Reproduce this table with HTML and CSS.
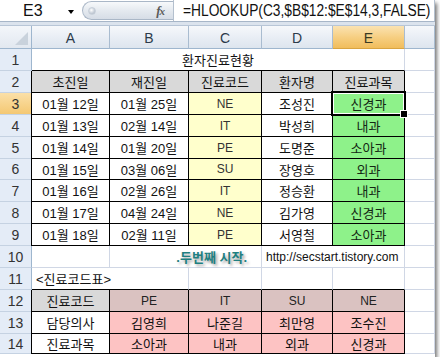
FILE: index.html
```html
<!DOCTYPE html>
<html lang="ko">
<head>
<meta charset="utf-8">
<link rel="stylesheet" href="styles.css">
</head>
<body>
<div class="frame">
  <div class="fbar">
    <div class="namebox"><span class="ref">E3</span><span class="arrow"></span></div>
    <div class="pill"><span class="knob"></span><span class="fx"><span class="f">f</span><span class="x">x</span></span></div>
    <div class="formula"><span class="ftext">=HLOOKUP(C3,$B$12:$E$14,3,FALSE)</span></div>
  </div>
  <div class="band"></div>
  <div class="sheet">
    <div class="corner"><span class="tri"></span></div>
    <div class="ch">A</div><div class="ch">B</div><div class="ch">C</div><div class="ch">D</div><div class="ch on">E</div><div class="ch"></div>

    <div class="rh">1</div>
    <div class="c m5 bb">환자진료현황</div><div class="c"></div>

    <div class="rh">2</div>
    <div class="c k hd lft">초진일</div><div class="c k hd">재진일</div><div class="c k hd">진료코드</div><div class="c k hd">환자명</div><div class="c k hd">진료과목</div><div class="c"></div>

    <div class="rh on">3</div>
    <div class="c k lft">01월 12일</div><div class="c k">01월 25일</div><div class="c k yl">NE</div><div class="c k">조성진</div><div class="c k gr sel">신경과</div><div class="c"></div>

    <div class="rh">4</div>
    <div class="c k lft">01월 13일</div><div class="c k">02월 14일</div><div class="c k yl">IT</div><div class="c k">박성희</div><div class="c k gr">내과</div><div class="c"></div>

    <div class="rh">5</div>
    <div class="c k lft">01월 14일</div><div class="c k">01월 20일</div><div class="c k yl">PE</div><div class="c k">도명준</div><div class="c k gr">소아과</div><div class="c"></div>

    <div class="rh">6</div>
    <div class="c k lft">01월 15일</div><div class="c k">03월 06일</div><div class="c k yl">SU</div><div class="c k">장영호</div><div class="c k gr">외과</div><div class="c"></div>

    <div class="rh">7</div>
    <div class="c k lft">01월 16일</div><div class="c k">02월 26일</div><div class="c k yl">IT</div><div class="c k">정승환</div><div class="c k gr">내과</div><div class="c"></div>

    <div class="rh">8</div>
    <div class="c k lft">01월 17일</div><div class="c k">04월 24일</div><div class="c k yl">NE</div><div class="c k">김가영</div><div class="c k gr">신경과</div><div class="c"></div>

    <div class="rh">9</div>
    <div class="c k lft">01월 18일</div><div class="c k">02월 11일</div><div class="c k yl">PE</div><div class="c k">서영철</div><div class="c k gr">소아과</div><div class="c"></div>

    <div class="rh">10</div>
    <div class="c"></div><div class="c m2 right"><span class="title2">.두번째 시작.</span></div><div class="c m2 left"><span class="url">http://secstart.tistory.com</span></div><div class="c"></div>

    <div class="rh">11</div>
    <div class="c m2 left bb"><span class="note">&lt;진료코드표&gt;</span></div><div class="c bb"></div><div class="c bb"></div><div class="c bb"></div><div class="c"></div>

    <div class="rh">12</div>
    <div class="c k hd lft">진료코드</div><div class="c k dp code">PE</div><div class="c k dp code">IT</div><div class="c k dp code">SU</div><div class="c k dp code">NE</div><div class="c"></div>

    <div class="rh">13</div>
    <div class="c k lft">담당의사</div><div class="c k pk">김영희</div><div class="c k pk">나준길</div><div class="c k pk">최만영</div><div class="c k pk">조수진</div><div class="c"></div>

    <div class="rh">14</div>
    <div class="c k lft">진료과목</div><div class="c k pk">소아과</div><div class="c k pk">내과</div><div class="c k pk">외과</div><div class="c k pk">신경과</div><div class="c"></div>
  </div>
</div>
</body>
</html>
```
FILE: styles.css
```css
* { box-sizing: border-box; }
body {
  margin: 0;
  background: #fff;
  font-family: "Liberation Sans", "Noto Sans CJK KR", sans-serif;
}
.frame {
  width: 435px;
  height: 357px;
  overflow: hidden;
  background: #fff;
  box-shadow: 2px 3px 4px rgba(0, 0, 0, 0.55);
}

/* formula bar */
.fbar {
  display: flex;
  height: 22px;
  background: #fff;
  border-bottom: 1px solid #a7b6c8;
}
.namebox {
  width: 82px;
  display: flex;
  align-items: center;
  position: relative;
}
.ref {
  padding-left: 23px;
  font-size: 16px;
  color: #111;
  width: 68px;
}
.arrow {
  width: 0;
  height: 0;
  border-left: 3.5px solid transparent;
  border-right: 3.5px solid transparent;
  border-top: 4px solid #000;
  margin-top: 2px;
}
.pill {
  width: 91px;
  height: 19px;
  margin-top: 1px;
  border: 1px solid #aab7c7;
  border-right: none;
  border-radius: 10px 0 0 10px;
  background: linear-gradient(#f7f9fb, #e3e8ee 55%, #d6dde6);
  display: flex;
  align-items: center;
  justify-content: space-between;
  padding: 0 9px 0 5px;
}
.knob {
  width: 8px;
  height: 8px;
  border-radius: 50%;
  background: radial-gradient(circle at 40% 35%, #ffffff, #c4ccd6 60%, #a7b1bd);
  border: 1px solid #c8d0da;
}
.fx {
  font-family: "Liberation Serif", serif;
  font-style: italic;
  font-weight: bold;
  color: #5a5a5a;
  font-size: 13px;
  letter-spacing: -1px;
}
.fx .x { font-size: 11px; }
.formula {
  flex: 1;
  border-left: 1px solid #b4c0ce;
  border-right: 1px solid #b4c0ce;
  display: flex;
  align-items: center;
  padding-left: 9px;
  overflow: hidden;
  white-space: nowrap;
}
.ftext {
  display: inline-block;
  font-size: 16px;
  color: #111;
  transform: scaleX(0.86);
  transform-origin: left center;
}
.band {
  height: 4px;
  background: #dbe3ed;
  border-bottom: 1px solid #b8c6d7;
}

/* sheet */
.sheet {
  display: grid;
  grid-template-columns: 32px 78px 79px 73px 71px 72px 30px;
  grid-template-rows: 23px repeat(5, 22px) 21px repeat(7, 22px);
}
.corner {
  background: linear-gradient(#f3f6fa, #e2e8f0);
  border-right: 1px solid #9eb6ce;
  border-bottom: 1px solid #9eb6ce;
  position: relative;
}
.tri {
  position: absolute;
  right: 3px;
  bottom: 3px;
  width: 0;
  height: 0;
  border-left: 13px solid transparent;
  border-bottom: 13px solid #c9d2dc;
}
.ch {
  background: linear-gradient(#f6f8fb, #e9eef5 50%, #dde5ee);
  border-right: 1px solid #a9bcd0;
  border-bottom: 1px solid #9eb6ce;
  display: flex;
  align-items: center;
  justify-content: center;
  font-size: 14px;
  color: #2c3a4a;
  padding-top: 1px;
}
.ch.on {
  background: linear-gradient(#fbe3b2, #f6cf83 50%, #f1bd5c);
  color: #3b3a22;
  border-bottom-color: #d9a441;
}
.rh {
  background: #e4ecf7;
  border-right: 1px solid #9eb6ce;
  border-bottom: 1px solid #c5d2e2;
  display: flex;
  align-items: center;
  justify-content: center;
  font-size: 14px;
  color: #333;
}
.rh.on {
  background: linear-gradient(#fbe0a8, #f4c873);
  border-right-color: #d9a441;
}
.c {
  border-right: 1px solid #d0d7e5;
  border-bottom: 1px solid #d0d7e5;
  display: flex;
  align-items: center;
  justify-content: center;
  font-size: 13px;
  color: #111;
  white-space: nowrap;
  background: #fff;
}
.m5 { grid-column: span 5; border-right-color: #d0d7e5; }
.m2 { grid-column: span 2; }
.bb { border-bottom-color: #000; }
.k { border-right-color: #000; border-bottom-color: #000; }
.lft { box-shadow: -1px 0 0 #000; }
.hd { background: #d9d9d9; }
.yl { background: #ffffcc; font-size: 12px; color: #333; }
.gr { background: #8ef28a; color: #142814; }
.dp { background: #dac2c1; }
.pk { background: #fdc3c3; }
.code { font-size: 12px; color: #222; }
.right { justify-content: flex-end; padding-right: 14px; }
.left { justify-content: flex-start; padding-left: 4px; }
.title2 {
  font-weight: bold;
  font-size: 13px;
  color: #1f7f80;
  text-shadow: 2px 2px 3px rgba(0, 0, 0, 0.35);
}
.url { font-size: 12px; color: #111; }
.note { font-size: 13px; }
.sel { position: relative; }
.sel::after {
  content: "";
  position: absolute;
  left: -2px;
  top: -2px;
  right: -2px;
  bottom: -2px;
  border: 2px solid #000;
  box-shadow: inset 0 0 0 1px #fff;
}
.sel::before {
  content: "";
  position: absolute;
  right: -4px;
  bottom: -4px;
  width: 6px;
  height: 6px;
  background: #000;
  border: 1px solid #fff;
  z-index: 2;
}
```
